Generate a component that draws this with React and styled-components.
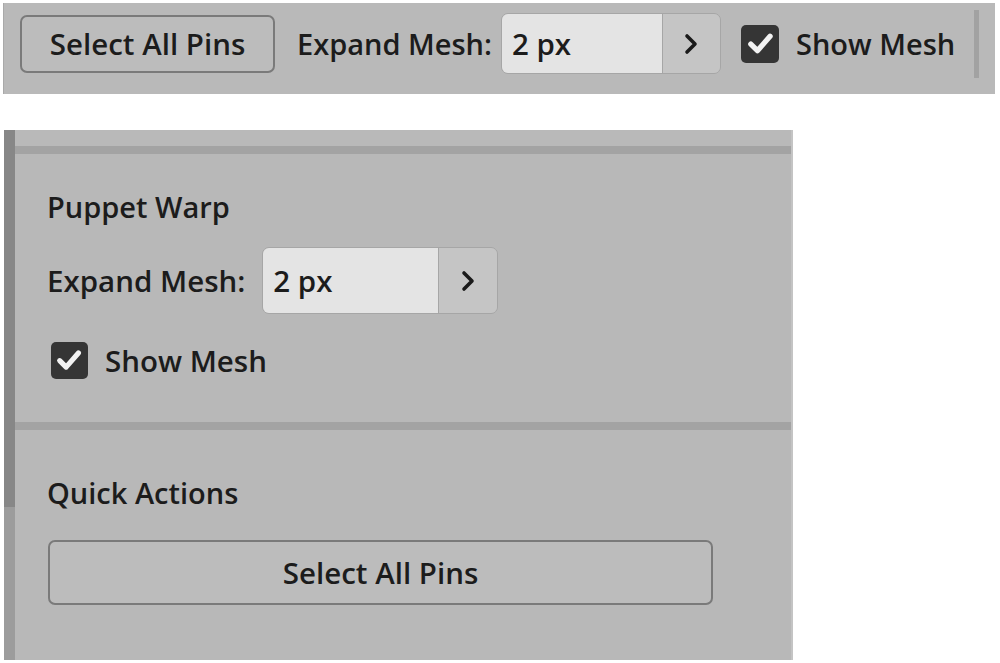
import React from "react";
import styled, { createGlobalStyle } from "styled-components";

const Global = createGlobalStyle`
  html, body { margin: 0; padding: 0; background: #ffffff; }
  body { font-family: "Open Sans", "Noto Sans", sans-serif; color: #1c1c1c; }
  * { box-sizing: border-box; }
`;

const Page = styled.div`
  width: 1000px;
  height: 663px;
  padding: 3px 5px 0 3px;
  display: flex;
  flex-direction: column;
  gap: 36px;
  overflow: hidden;
`;

const OptionsBar = styled.div`
  height: 91px;
  background: #b9b9b9;
  border-left: 1px solid #a9a9a9;
  display: flex;
  align-items: center;
  padding: 0 0 10px 16px;
`;

const Button = styled.button`
  font-family: "Open Sans", "Noto Sans", sans-serif;
  font-size: 29.5px;
  font-weight: 600;
  color: #1c1c1c;
  background: #bcbcbc;
  border: 2px solid #7a7a7a;
  border-radius: 7px;
  height: ${(p) => p.$h}px;
  width: ${(p) => p.$w}px;
  padding: 0;
  display: flex;
  align-items: center;
  justify-content: center;
  line-height: 1;
`;

const Label = styled.span`
  font-size: ${(p) => p.$fs || 29.5}px;
  font-weight: 600;
  white-space: nowrap;
  margin-left: ${(p) => p.$ml || 0}px;
  line-height: 1;
`;

const Stepper = styled.div`
  display: flex;
  height: ${(p) => p.$h}px;
  margin-left: ${(p) => p.$ml}px;
  border: 1.5px solid #a6a6a6;
  border-radius: 7px;
  overflow: hidden;
`;

const Field = styled.div`
  width: ${(p) => p.$w}px;
  background: #e4e4e4;
  display: flex;
  align-items: center;
  padding-left: 10px;
  font-size: 29.5px;
  font-weight: 600;
  border-right: 1.5px solid #a6a6a6;
`;

const Arrow = styled.div`
  width: ${(p) => p.$w}px;
  background: #c5c5c5;
  display: flex;
  align-items: center;
  justify-content: center;
`;

const CheckRow = styled.label`
  display: flex;
  align-items: center;
  gap: 17px;
  margin-left: ${(p) => p.$ml || 0}px;
`;

const Box = styled.span`
  width: ${(p) => p.$s}px;
  height: ${(p) => p.$s}px;
  background: #353535;
  border-radius: 5px;
  display: flex;
  align-items: center;
  justify-content: center;
`;

const Separator = styled.div`
  width: 5px;
  height: 68px;
  margin-left: 19px;
  background: #a2a2a2;
  align-self: center;
`;

const Panel = styled.div`
  margin-left: 1px;
  width: 789px;
  height: 530px;
  background: #b8b8b8;
  display: flex;
  border-right: 2px solid #c4c4c4;
`;

const Scrollbar = styled.div`
  width: 11px;
  background: #9c9c9c;
  display: flex;
  flex-direction: column;
`;

const Thumb = styled.div`
  height: 377px;
  background: #878787;
`;

const PanelBody = styled.div`
  flex: 1;
  display: flex;
  flex-direction: column;
`;

const TopStrip = styled.div`
  height: 16px;
  background: #b9b9b9;
`;

const Divider = styled.div`
  height: 8px;
  background: #a3a3a3;
`;

const Section = styled.div`
  height: ${(p) => p.$h}px;
  padding: ${(p) => p.$pt}px 0 0 32px;
  display: flex;
  flex-direction: column;
`;

const Title = styled.div`
  font-size: 29px;
  font-weight: 600;
  line-height: 1;
  height: 30px;
  display: flex;
  align-items: center;
`;

const Row = styled.div`
  display: flex;
  align-items: center;
  margin-top: ${(p) => p.$mt}px;
  margin-left: ${(p) => p.$ml || 0}px;
`;

const Check = ({ size }) => (
  <Box $s={size}>
    <svg width={size * 0.76} height={size * 0.76} viewBox="0 0 24 24">
      <polyline
        points="4,12.5 9.5,18 20,6"
        fill="none"
        stroke="#f2f2f2"
        strokeWidth="4.4"
        strokeLinecap="round"
        strokeLinejoin="round"
      />
    </svg>
  </Box>
);

const Chevron = () => (
  <svg width="16" height="22" viewBox="0 0 16 22">
    <polyline
      points="4,3 12,11 4,19"
      fill="none"
      stroke="#1a1a1a"
      strokeWidth="3.6"
      strokeLinecap="round"
      strokeLinejoin="round"
    />
  </svg>
);

export default function App() {
  return (
    <>
      <Global />
      <Page>
        <OptionsBar>
          <Button $w={255} $h={58}>Select All Pins</Button>
          <Label $ml={22} $fs={29}>Expand Mesh:</Label>
          <Stepper $h={61} $ml={9}>
            <Field $w={161}>2 px</Field>
            <Arrow $w={57}>
              <Chevron />
            </Arrow>
          </Stepper>
          <CheckRow $ml={20}>
            <Check size={38} />
            <Label $fs={29}>Show Mesh</Label>
          </CheckRow>
          <Separator />
        </OptionsBar>

        <Panel>
          <Scrollbar>
            <Thumb />
          </Scrollbar>
          <PanelBody>
            <TopStrip />
            <Divider />
            <Section $h={268} $pt={37}>
              <Title>Puppet Warp</Title>
              <Row $mt={26}>
                <Label>Expand Mesh:</Label>
                <Stepper $h={67} $ml={17}>
                  <Field $w={176}>2 px</Field>
                  <Arrow $w={58}>
                    <Chevron />
                  </Arrow>
                </Stepper>
              </Row>
              <Row $mt={28} $ml={4}>
                <CheckRow>
                  <Check size={37} />
                  <Label>Show Mesh</Label>
                </CheckRow>
              </Row>
            </Section>
            <Divider />
            <Section $h={230} $pt={47}>
              <Title>Quick Actions</Title>
              <Row $mt={33} $ml={1}>
                <Button $w={665} $h={65}>Select All Pins</Button>
              </Row>
            </Section>
          </PanelBody>
        </Panel>
      </Page>
    </>
  );
}
